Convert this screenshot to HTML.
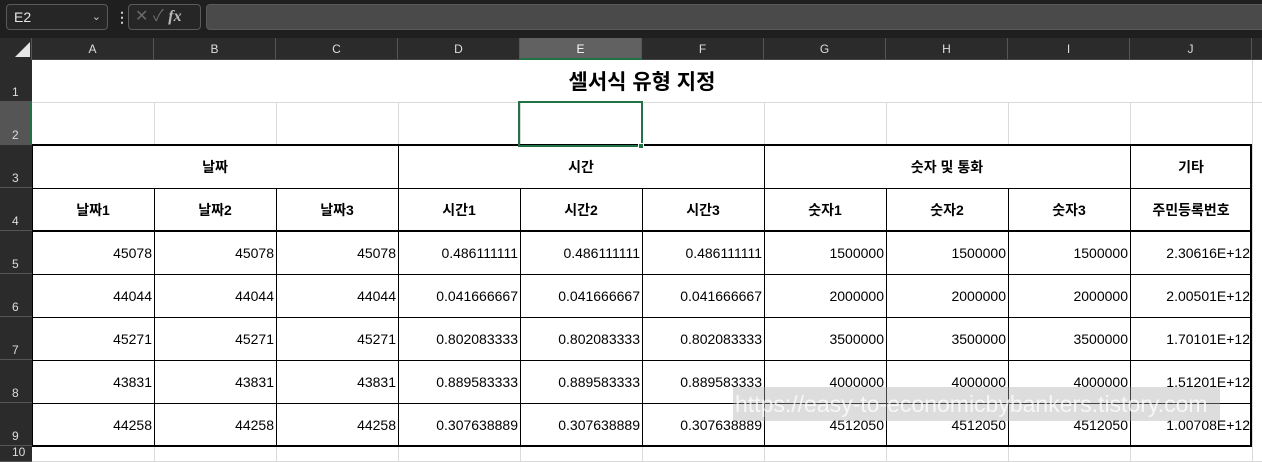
<!DOCTYPE html><html><head><meta charset="utf-8"><style>
*{margin:0;padding:0;box-sizing:border-box}
body{width:1262px;height:462px;overflow:hidden;background:#fff;position:relative;font-family:"Liberation Sans","Noto Sans CJK KR",sans-serif}
.a{position:absolute}
.top{left:0;top:0;width:1262px;height:38px;background:#1f1f1f}
.ch{top:38px;height:22px;background:#2b2b2b;color:#ddd;font-size:12px;text-align:center;line-height:22px;border-right:1px solid #555;border-bottom:1px solid #444}
.rh{left:0;width:32px;background:#2b2b2b;color:#ddd;font-size:12px;border-bottom:1px solid #555;padding:0 0 0 12px;display:flex;align-items:flex-end;padding-bottom:2px}
.vl{width:1px;background:#dadada;top:60px;height:402px}
.hl{height:1px;background:#dadada;left:32px;width:1230px}
.c{font-size:14px;color:#000;height:43px;display:flex;align-items:center;width:122px}
.r{justify-content:flex-end;padding-right:2px}
.m{justify-content:center;font-weight:bold}
.bv{width:1px;background:#000}
.bh{height:1px;background:#000;left:32px;width:1220px}
</style></head><body>
<div class="a top"></div>
<div class="a" style="left:6px;top:4px;width:102px;height:26px;border:1px solid #5a5a5a;border-radius:4px;background:#262626;color:#e6e6e6;font-size:14px;line-height:24px;padding-left:7px">E2<span style="position:absolute;right:6px;top:0;font-size:11px;color:#ccc">&#8964;</span></div>
<div class="a" style="left:115px;top:9px;color:#ccc;font-size:14px;font-weight:bold">⋮</div>
<div class="a" style="left:128px;top:4px;width:73px;height:26px;border:1px solid #5a5a5a;border-radius:4px;background:#262626;color:#6a6a6a;font-size:16px;line-height:24px;padding-left:6px">✕ ✓ <i style="color:#bbb;font-family:'Liberation Serif',serif;font-weight:bold">fx</i></div>
<div class="a" style="left:206px;top:4px;width:1060px;height:26px;border:1px solid #5a5a5a;border-radius:4px;background:#4a4a4a"></div>
<div class="a" style="left:0;top:38px;width:32px;height:22px;background:#2b2b2b;border-right:1px solid #555"></div>
<div class="a" style="left:15px;top:42px;width:0;height:0;border-left:15px solid transparent;border-bottom:15px solid #e6e6e6"></div>
<div class="a ch" style="left:32px;width:122px">A</div>
<div class="a ch" style="left:154px;width:122px">B</div>
<div class="a ch" style="left:276px;width:122px">C</div>
<div class="a ch" style="left:398px;width:122px">D</div>
<div class="a ch" style="left:520px;width:122px;background:#616161;border-bottom:2px solid #217346;color:#fff">E</div>
<div class="a ch" style="left:642px;width:122px">F</div>
<div class="a ch" style="left:764px;width:122px">G</div>
<div class="a ch" style="left:886px;width:122px">H</div>
<div class="a ch" style="left:1008px;width:122px">I</div>
<div class="a ch" style="left:1130px;width:122px">J</div>
<div class="a ch" style="left:1252px;width:20px"></div>
<div class="a rh" style="top:60px;height:42px">1</div>
<div class="a rh" style="top:102px;height:43px;background:#555;border-right:2px solid #217346">2</div>
<div class="a rh" style="top:145px;height:43px">3</div>
<div class="a rh" style="top:188px;height:43px">4</div>
<div class="a rh" style="top:231px;height:43px">5</div>
<div class="a rh" style="top:274px;height:43px">6</div>
<div class="a rh" style="top:317px;height:43px">7</div>
<div class="a rh" style="top:360px;height:43px">8</div>
<div class="a rh" style="top:403px;height:43px">9</div>
<div class="a rh" style="top:446px;height:16px">10</div>
<div class="a hl" style="top:102px"></div>
<div class="a hl" style="top:461px"></div>
<div class="a vl" style="left:154px;top:102px;height:43px"></div><div class="a vl" style="left:276px;top:102px;height:43px"></div><div class="a vl" style="left:398px;top:102px;height:43px"></div><div class="a vl" style="left:520px;top:102px;height:43px"></div><div class="a vl" style="left:642px;top:102px;height:43px"></div><div class="a vl" style="left:764px;top:102px;height:43px"></div><div class="a vl" style="left:886px;top:102px;height:43px"></div><div class="a vl" style="left:1008px;top:102px;height:43px"></div><div class="a vl" style="left:1130px;top:102px;height:43px"></div><div class="a vl" style="left:1252px;top:60px;height:402px"></div>
<div class="a vl" style="left:154px;top:446px;height:16px"></div><div class="a vl" style="left:276px;top:446px;height:16px"></div><div class="a vl" style="left:398px;top:446px;height:16px"></div><div class="a vl" style="left:520px;top:446px;height:16px"></div><div class="a vl" style="left:642px;top:446px;height:16px"></div><div class="a vl" style="left:764px;top:446px;height:16px"></div><div class="a vl" style="left:886px;top:446px;height:16px"></div><div class="a vl" style="left:1008px;top:446px;height:16px"></div><div class="a vl" style="left:1130px;top:446px;height:16px"></div>
<div class="a" style="left:32px;top:60px;width:1220px;height:42px;display:flex;align-items:center;justify-content:center;font-size:21px;font-weight:bold">셀서식 유형 지정</div>
<div class="a bh" style="top:144px;height:2px"></div>
<div class="a bh" style="top:188px"></div>
<div class="a bh" style="top:230px;height:2px"></div>
<div class="a bh" style="top:274px"></div><div class="a bh" style="top:317px"></div><div class="a bh" style="top:360px"></div><div class="a bh" style="top:403px"></div>
<div class="a bh" style="top:445px;height:2px"></div>
<div class="a bv" style="left:32px;top:145px;height:301px"></div>
<div class="a bv" style="left:1250px;top:145px;height:301px;width:2px"></div>
<div class="a bv" style="left:154px;top:188px;height:258px"></div>
<div class="a bv" style="left:276px;top:188px;height:258px"></div>
<div class="a bv" style="left:398px;top:145px;height:301px"></div>
<div class="a bv" style="left:520px;top:188px;height:258px"></div>
<div class="a bv" style="left:642px;top:188px;height:258px"></div>
<div class="a bv" style="left:764px;top:145px;height:301px"></div>
<div class="a bv" style="left:886px;top:188px;height:258px"></div>
<div class="a bv" style="left:1008px;top:188px;height:258px"></div>
<div class="a bv" style="left:1130px;top:145px;height:301px"></div>
<div class="a c m" style="left:32px;top:145px;width:366px">날짜</div>
<div class="a c m" style="left:398px;top:145px;width:366px">시간</div>
<div class="a c m" style="left:764px;top:145px;width:366px">숫자 및 통화</div>
<div class="a c m" style="left:1130px;top:145px">기타</div>
<div class="a c m" style="left:32px;top:188px">날짜1</div><div class="a c m" style="left:154px;top:188px">날짜2</div><div class="a c m" style="left:276px;top:188px">날짜3</div><div class="a c m" style="left:398px;top:188px">시간1</div><div class="a c m" style="left:520px;top:188px">시간2</div><div class="a c m" style="left:642px;top:188px">시간3</div><div class="a c m" style="left:764px;top:188px">숫자1</div><div class="a c m" style="left:886px;top:188px">숫자2</div><div class="a c m" style="left:1008px;top:188px">숫자3</div><div class="a c m" style="left:1130px;top:188px">주민등록번호</div>
<div class="a c r" style="left:32px;top:231px">45078</div><div class="a c r" style="left:154px;top:231px">45078</div><div class="a c r" style="left:276px;top:231px">45078</div><div class="a c r" style="left:398px;top:231px">0.486111111</div><div class="a c r" style="left:520px;top:231px">0.486111111</div><div class="a c r" style="left:642px;top:231px">0.486111111</div><div class="a c r" style="left:764px;top:231px">1500000</div><div class="a c r" style="left:886px;top:231px">1500000</div><div class="a c r" style="left:1008px;top:231px">1500000</div><div class="a c r" style="left:1130px;top:231px">2.30616E+12</div>
<div class="a c r" style="left:32px;top:274px">44044</div><div class="a c r" style="left:154px;top:274px">44044</div><div class="a c r" style="left:276px;top:274px">44044</div><div class="a c r" style="left:398px;top:274px">0.041666667</div><div class="a c r" style="left:520px;top:274px">0.041666667</div><div class="a c r" style="left:642px;top:274px">0.041666667</div><div class="a c r" style="left:764px;top:274px">2000000</div><div class="a c r" style="left:886px;top:274px">2000000</div><div class="a c r" style="left:1008px;top:274px">2000000</div><div class="a c r" style="left:1130px;top:274px">2.00501E+12</div>
<div class="a c r" style="left:32px;top:317px">45271</div><div class="a c r" style="left:154px;top:317px">45271</div><div class="a c r" style="left:276px;top:317px">45271</div><div class="a c r" style="left:398px;top:317px">0.802083333</div><div class="a c r" style="left:520px;top:317px">0.802083333</div><div class="a c r" style="left:642px;top:317px">0.802083333</div><div class="a c r" style="left:764px;top:317px">3500000</div><div class="a c r" style="left:886px;top:317px">3500000</div><div class="a c r" style="left:1008px;top:317px">3500000</div><div class="a c r" style="left:1130px;top:317px">1.70101E+12</div>
<div class="a c r" style="left:32px;top:360px">43831</div><div class="a c r" style="left:154px;top:360px">43831</div><div class="a c r" style="left:276px;top:360px">43831</div><div class="a c r" style="left:398px;top:360px">0.889583333</div><div class="a c r" style="left:520px;top:360px">0.889583333</div><div class="a c r" style="left:642px;top:360px">0.889583333</div><div class="a c r" style="left:764px;top:360px">4000000</div><div class="a c r" style="left:886px;top:360px">4000000</div><div class="a c r" style="left:1008px;top:360px">4000000</div><div class="a c r" style="left:1130px;top:360px">1.51201E+12</div>
<div class="a c r" style="left:32px;top:403px">44258</div><div class="a c r" style="left:154px;top:403px">44258</div><div class="a c r" style="left:276px;top:403px">44258</div><div class="a c r" style="left:398px;top:403px">0.307638889</div><div class="a c r" style="left:520px;top:403px">0.307638889</div><div class="a c r" style="left:642px;top:403px">0.307638889</div><div class="a c r" style="left:764px;top:403px">4512050</div><div class="a c r" style="left:886px;top:403px">4512050</div><div class="a c r" style="left:1008px;top:403px">4512050</div><div class="a c r" style="left:1130px;top:403px">1.00708E+12</div>
<div class="a" style="left:518px;top:101px;width:125px;height:46px;border:2px solid #217346"></div>
<div class="a" style="left:638px;top:143px;width:6px;height:6px;background:#217346;border:1px solid #fff"></div>
<div class="a" style="left:733px;top:387px;width:487px;height:34px;background:rgba(170,170,170,0.4);color:rgba(255,255,255,0.75);font-size:23px;line-height:34px;padding-left:2px;white-space:nowrap;overflow:hidden">https://easy-to-economicbybankers.tistory.com</div>
</body></html>
